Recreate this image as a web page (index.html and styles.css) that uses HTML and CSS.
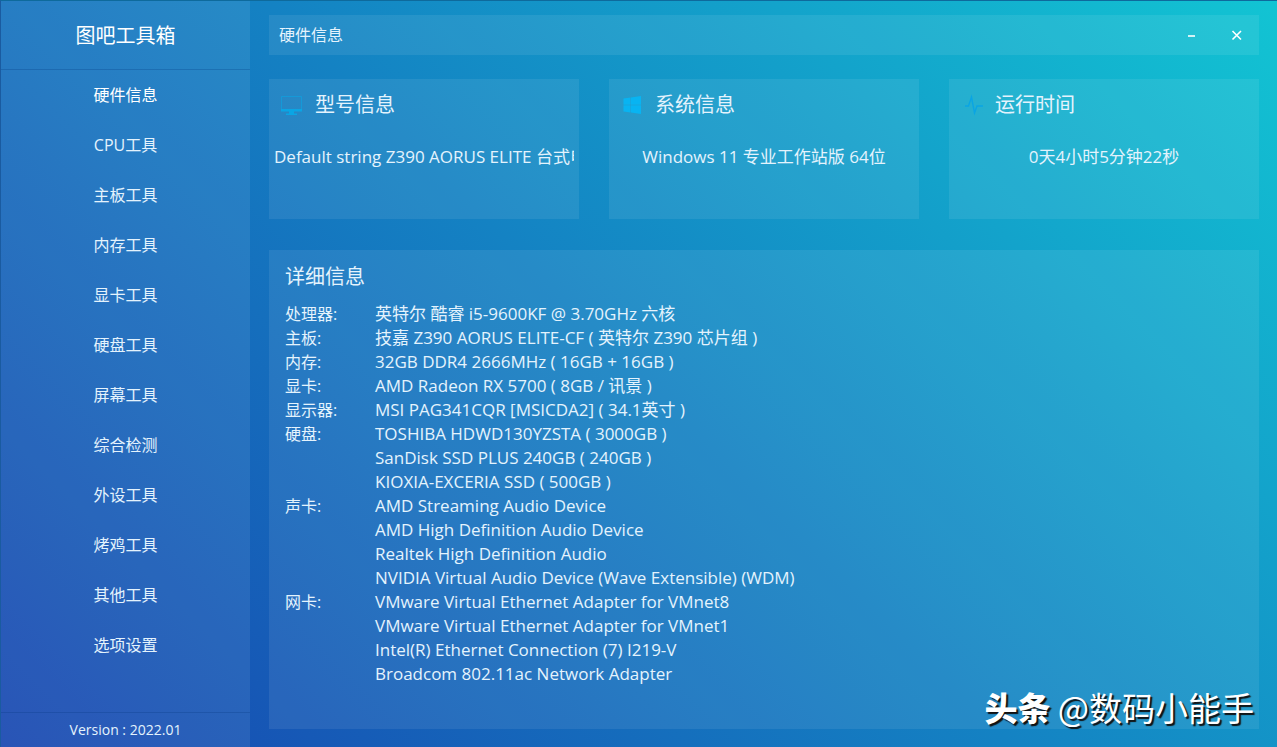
FILE: index.html
```html
<!DOCTYPE html>
<html lang="zh-CN">
<head>
    <meta charset="UTF-8">
    <meta name="viewport" content="width=device-width, initial-scale=1.0">
    <title>图吧工具箱</title>
    <link rel="stylesheet" href="styles.css">
</head>
<body>
    <div class="app">
        <aside class="sidebar">
            <h1 class="brand">图吧工具箱</h1>
            <nav class="menu">
                <a href="#hardware" class="active">硬件信息</a>
                <a href="#cpu">CPU工具</a>
                <a href="#board">主板工具</a>
                <a href="#memory">内存工具</a>
                <a href="#gpu">显卡工具</a>
                <a href="#disk">硬盘工具</a>
                <a href="#screen">屏幕工具</a>
                <a href="#benchmark">综合检测</a>
                <a href="#peripheral">外设工具</a>
                <a href="#stress">烤鸡工具</a>
                <a href="#other">其他工具</a>
                <a href="#settings">选项设置</a>
            </nav>
            <p class="version">Version : 2022.01</p>
        </aside>

        <main class="main">
            <header class="titlebar">
                <h2>硬件信息</h2>
                <div class="window-buttons">
                    <button type="button" aria-label="最小化">
                        <svg width="12" height="12" viewBox="0 0 12 12"><path d="M2 7H9" /></svg>
                    </button>
                    <button type="button" aria-label="关闭">
                        <svg width="12" height="12" viewBox="0 0 12 12"><path d="M1.500 2L10 10.500M10 2L1.500 10.500" /></svg>
                    </button>
                </div>
            </header>

            <div class="cards">
                <section class="card">
                    <h3>
                        <svg class="icon" width="24" height="24" viewBox="0 0 24 24">
                            <path class="line" d="M2.500 3.500H22.500V17H2.500Z" />
                            <path d="M2 16H23V18.500H15V20.500H18V22H7V20.500H10V18.500H2Z" />
                        </svg>
                        型号信息
                    </h3>
                    <p>Default string Z390 AORUS ELITE 台式电脑</p>
                </section>

                <section class="card">
                    <h3>
                        <svg class="icon bright" width="24" height="24" viewBox="0 0 24 24">
                            <path d="M4.500 5.500L11.500 4.500V11.800H4.500ZM12 4.400L22 3V11.800H12ZM4.500 12.300H11.500V19.500L4.500 18.500ZM12 12.300H22V21L12 19.600Z" />
                        </svg>
                        系统信息
                    </h3>
                    <p>Windows 11 专业工作站版 64位</p>
                </section>

                <section class="card">
                    <h3>
                        <svg class="icon" width="24" height="24" viewBox="0 0 24 24">
                            <path class="pulse" d="M6 13H9.500L12.500 4L15.500 20L18 13H24" />
                        </svg>
                        运行时间
                    </h3>
                    <p>0天4小时5分钟22秒</p>
                </section>
            </div>

            <section class="details">
                <h3>详细信息</h3>
                <dl>
                    <dt>处理器:</dt>
                    <dd>英特尔 酷睿 i5-9600KF @ 3.70GHz 六核</dd>
                    <dt>主板:</dt>
                    <dd>技嘉 Z390 AORUS ELITE-CF ( 英特尔 Z390 芯片组 )</dd>
                    <dt>内存:</dt>
                    <dd>32GB DDR4 2666MHz ( 16GB + 16GB )</dd>
                    <dt>显卡:</dt>
                    <dd>AMD Radeon RX 5700 ( 8GB / 讯景 )</dd>
                    <dt>显示器:</dt>
                    <dd>MSI PAG341CQR [MSICDA2] ( 34.1英寸 )</dd>
                    <dt>硬盘:</dt>
                    <dd>TOSHIBA HDWD130YZSTA ( 3000GB )</dd>
                    <dd>SanDisk SSD PLUS 240GB ( 240GB )</dd>
                    <dd>KIOXIA-EXCERIA SSD ( 500GB )</dd>
                    <dt>声卡:</dt>
                    <dd>AMD Streaming Audio Device</dd>
                    <dd>AMD High Definition Audio Device</dd>
                    <dd>Realtek High Definition Audio</dd>
                    <dd>NVIDIA Virtual Audio Device (Wave Extensible) (WDM)</dd>
                    <dt>网卡:</dt>
                    <dd>VMware Virtual Ethernet Adapter for VMnet8</dd>
                    <dd>VMware Virtual Ethernet Adapter for VMnet1</dd>
                    <dd>Intel(R) Ethernet Connection (7) I219-V</dd>
                    <dd>Broadcom 802.11ac Network Adapter</dd>
                </dl>
            </section>
        </main>

        <p class="watermark"><b>头条</b> @数码小能手</p>
    </div>
</body>
</html>
```
FILE: styles.css
```css
:root {
    --panel: rgba(255, 255, 255, 0.08);
    --divider: rgba(0, 50, 120, 0.24);
    --text: #e4f3fd;
    --icon: #0aa5e4;
    --gap: 30px;
}

* {
    margin: 0;
    padding: 0;
    box-sizing: border-box;
}

body {
    font-family: "Open Sans", "Noto Sans CJK SC", sans-serif;
    font-size: 16px;
    line-height: 24px;
    color: var(--text);
}

h1, h2, h3 {
    font-weight: 400;
}

.app {
    position: relative;
    display: flex;
    min-height: 100vh;
    background: linear-gradient(45deg, #1746b0, #1482c3 50%, #12c4d3);
    border-top: 1px solid #0e6a9c;
    border-left: 1px solid #1a5ba0;
}

/* Sidebar */
.sidebar {
    display: flex;
    flex-direction: column;
    width: 249px;
    flex-shrink: 0;
    background: var(--panel);
    text-align: center;
}

.brand {
    padding: 23px 0 21px;
    border-bottom: 1px solid var(--divider);
    font-size: 20px;
    line-height: 24px;
    color: #fff;
}

.menu {
    flex: 1;
}

.menu a {
    display: block;
    line-height: 50px;
    color: var(--text);
    text-decoration: none;
}

.menu .active {
    color: #fff;
}

.version {
    padding: 5px 0;
    border-top: 1px solid var(--divider);
    font-size: 14px;
}

/* Content */
.main {
    flex: 1;
    display: flex;
    flex-direction: column;
    min-width: 0;
    padding: 14px 18px 18px 19px;
}

.titlebar {
    display: flex;
    align-items: center;
    justify-content: space-between;
    height: 40px;
    padding-left: 10px;
    background: var(--panel);
}

.titlebar h2 {
    font-size: 16px;
}

.window-buttons {
    display: flex;
}

.window-buttons button {
    display: grid;
    place-items: center;
    width: 45px;
    height: 40px;
    background: none;
    border: 0;
}

.window-buttons path {
    fill: none;
    stroke: #fff;
    stroke-width: 1.6;
}

.cards {
    display: grid;
    grid-template-columns: repeat(3, 1fr);
    gap: var(--gap);
    margin: 24px 0 31px;
}

.card {
    height: 140px;
    padding: 14px 5px;
    background: var(--panel);
    overflow: hidden;
}

.card h3 {
    display: flex;
    align-items: center;
    gap: 12px;
    padding-left: 5px;
    font-size: 20px;
    line-height: 24px;
}

.card p {
    margin-top: 28px;
    font-size: 17px;
    text-align: center;
    white-space: nowrap;
    overflow: hidden;
}

.icon {
    fill: var(--icon);
}

.icon.bright {
    fill: #08b4f2;
}

.icon .line {
    fill: none;
    stroke: var(--icon);
    opacity: 0.6;
}

.icon .pulse {
    fill: none;
    stroke: var(--icon);
    stroke-width: 1.4;
}

.details {
    flex: 1;
    padding: 15px 16px;
    background: var(--panel);
}

.details h3 {
    font-size: 20px;
}

.details dl {
    display: grid;
    grid-template-columns: 90px 1fr;
    margin-top: 13px;
}

.details dd {
    grid-column: 2;
    font-size: 17px;
}

.watermark {
    position: absolute;
    right: 23px;
    bottom: 16px;
    font-family: "Noto Sans CJK SC", sans-serif;
    font-size: 33px;
    line-height: 48px;
    color: #fff;
    text-shadow: 2px 2px 1px #111;
}

.watermark b {
    font-weight: 900;
}
```
